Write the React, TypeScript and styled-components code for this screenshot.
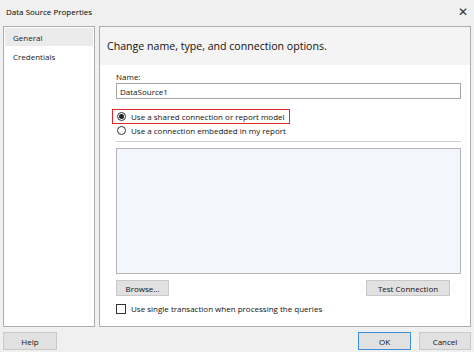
import styled, { createGlobalStyle } from 'styled-components';

const GlobalStyle = createGlobalStyle`
  html, body {
    margin: 0;
    padding: 0;
    background: #f0f0f0;
  }
  body {
    font-family: "Open Sans", "Noto Sans", "Liberation Sans", sans-serif;
    color: #111;
  }
`;

const Window = styled.div`
  width: 474px;
  height: 352px;
  box-sizing: border-box;
  background: #f0f0f0;
  display: flex;
  flex-direction: column;
  overflow: hidden;
`;

const TitleBar = styled.div`
  height: 22px;
  display: flex;
  align-items: center;
  justify-content: space-between;
  padding: 0 6px 0 6px;
  font-size: 8px;
  color: #000;
`;

const CloseGlyph = styled.span`
  font-size: 12px;
  color: #333;
  line-height: 1;
  margin-top: 2px;
`;

const Main = styled.div`
  display: flex;
  gap: 4px;
  padding: 4px 3px 0 3px;
  height: 301px;
`;

const Sidebar = styled.div`
  width: 92px;
  box-sizing: border-box;
  border: 1px solid #adadad;
  background: #fff;
  padding: 1px;
  display: flex;
  flex-direction: column;
`;

const NavItem = styled.div<{ $active?: boolean }>`
  height: 18px;
  display: flex;
  align-items: center;
  padding-left: 8px;
  font-size: 8px;
  color: #222;
  background: ${(p) => (p.$active ? '#ebebeb' : 'transparent')};
  margin-bottom: 1px;
`;

const Panel = styled.div`
  flex: 1;
  box-sizing: border-box;
  border: 1px solid #adadad;
  background: #fff;
  display: flex;
  flex-direction: column;
`;

const PanelHeader = styled.div`
  height: 38px;
  background: #f4f4f4;
  display: flex;
  align-items: center;
  padding-left: 7px;
  font-size: 10.6px;
  color: #111;
`;

const PanelBody = styled.div`
  padding: 4px 9px 0 16px;
  display: flex;
  flex-direction: column;
`;

const Label = styled.div`
  font-size: 8px;
  margin-top: 2px;
  margin-bottom: 1px;
`;

const TextInput = styled.div`
  height: 16px;
  box-sizing: border-box;
  border: 1px solid #a6a6a6;
  font-size: 8px;
  display: flex;
  align-items: center;
  padding-left: 3px;
`;

const RadioGroup = styled.div`
  margin-top: 10px;
  display: flex;
  flex-direction: column;
`;

const RadioRow = styled.div<{ $highlight?: boolean }>`
  display: flex;
  align-items: center;
  gap: 5px;
  height: 15px;
  box-sizing: border-box;
  font-size: 8px;
  align-self: flex-start;
  margin-left: -4px;
  padding: 0 4px 0 4px;
  border: 1px solid ${(p) => (p.$highlight ? '#e0262b' : 'transparent')};
  & + & {
    margin-top: -1px;
  }
`;

const RadioCircle = styled.span<{ $checked?: boolean }>`
  width: 9px;
  height: 9px;
  box-sizing: border-box;
  border: 1px solid #333;
  border-radius: 50%;
  display: flex;
  align-items: center;
  justify-content: center;
  background: #fff;
  &::after {
    content: '';
    width: 5px;
    height: 5px;
    border-radius: 50%;
    background: ${(p) => (p.$checked ? '#222' : 'transparent')};
  }
`;

const Separator = styled.div`
  height: 1px;
  background: #cfcfcf;
  margin-top: 3px;
`;

const ConnectionBox = styled.div`
  margin-top: 6px;
  height: 126px;
  box-sizing: border-box;
  border: 1px solid #b5b5b5;
  background: #f3f6fc;
`;

const ButtonRow = styled.div`
  margin-top: 6px;
  display: flex;
  justify-content: space-between;
  padding-right: 11px;
`;

const Button = styled.div<{ $width: number; $primary?: boolean }>`
  width: ${(p) => p.$width}px;
  height: ${(p) => (p.$primary !== undefined ? 18 : 16)}px;
  box-sizing: border-box;
  border: 1px solid ${(p) => (p.$primary ? '#3c8fd6' : '#c9c9c9')};
  background: #e1e1e1;
  font-size: 8px;
  display: flex;
  align-items: center;
  justify-content: center;
  color: #111;
`;

const CheckRow = styled.div`
  margin-top: 7px;
  display: flex;
  align-items: center;
  gap: 5px;
  font-size: 8px;
`;

const CheckBox = styled.span`
  width: 10px;
  height: 10px;
  box-sizing: border-box;
  border: 1px solid #333;
  background: #fff;
`;

const Footer = styled.div`
  display: flex;
  align-items: center;
  padding: 5px 3px 0 3px;
  gap: 8px;
`;

const Spacer = styled.div`
  flex: 1;
`;

export default function App() {
  return (
    <>
      <GlobalStyle />
      <Window>
        <TitleBar>
          <span>Data Source Properties</span>
          <CloseGlyph>✕</CloseGlyph>
        </TitleBar>
        <Main>
          <Sidebar>
            <NavItem $active>General</NavItem>
            <NavItem>Credentials</NavItem>
          </Sidebar>
          <Panel>
            <PanelHeader>Change name, type, and connection options.</PanelHeader>
            <PanelBody>
              <Label>Name:</Label>
              <TextInput>DataSource1</TextInput>
              <RadioGroup>
                <RadioRow $highlight>
                  <RadioCircle $checked />
                  Use a shared connection or report model
                </RadioRow>
                <RadioRow>
                  <RadioCircle />
                  Use a connection embedded in my report
                </RadioRow>
              </RadioGroup>
              <Separator />
              <ConnectionBox />
              <ButtonRow>
                <Button $width={53}>Browse...</Button>
                <Button $width={84}>Test Connection</Button>
              </ButtonRow>
              <CheckRow>
                <CheckBox />
                Use single transaction when processing the queries
              </CheckRow>
            </PanelBody>
          </Panel>
        </Main>
        <Footer>
          <Button $width={54} $primary={false}>Help</Button>
          <Spacer />
          <Button $width={53} $primary>OK</Button>
          <Button $width={52} $primary={false}>Cancel</Button>
        </Footer>
      </Window>
    </>
  );
}
